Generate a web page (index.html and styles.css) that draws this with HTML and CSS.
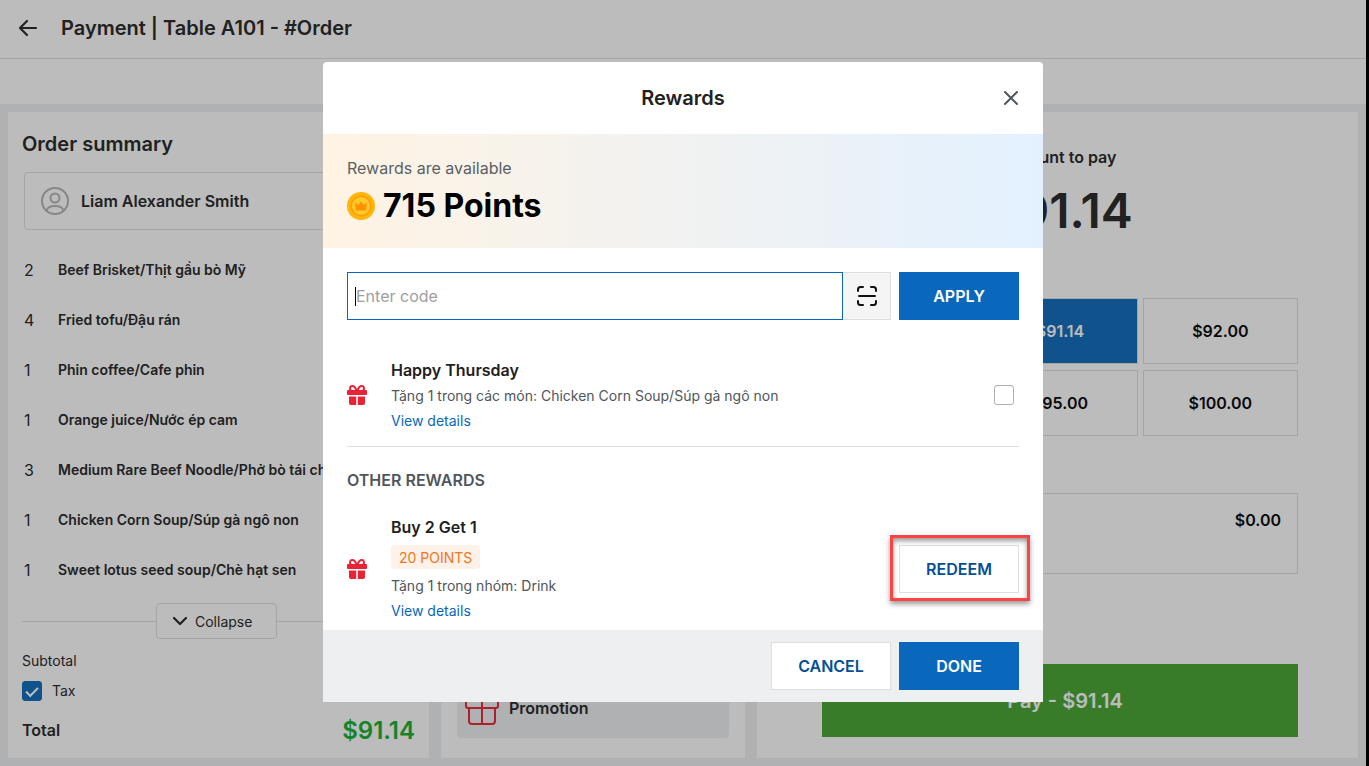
FILE: index.html
```
<!DOCTYPE html>
<html lang="en">
  <head>
    <meta charset="utf-8">
    <title>Payment</title>
    <link rel="stylesheet" href="styles.css">
  </head>
  <body>
    <div class="app">
      <header class="topbar">
        <button class="icon-btn" aria-label="Back">
          <svg width="20" height="18" viewBox="0 0 20 18" fill="none" stroke="#212121" stroke-width="2.200" stroke-linecap="round" stroke-linejoin="round"><path d="M18 9H2M9 2L2 9l7 7"/></svg>
        </button>
        <h1>Payment | Table A101 - #Order</h1>
      </header>
      <div class="subbar"></div>

      <main class="columns">
        <section class="panel order">
          <h2>Order summary</h2>
          <div class="customer">
            <svg width="28" height="28" viewBox="0 0 28 28" fill="none" stroke="#b0b3b5" stroke-width="2"><circle cx="14" cy="14" r="13"/><circle cx="14" cy="11" r="4.500"/><path d="M5.500 23.500c1-3.500 4-4.500 8.500-4.500s7.500 1 8.500 4.500"/></svg>
            <span>Liam Alexander Smith</span>
          </div>
          <ul class="items">
            <li><span class="qty">2</span><span class="name">Beef Brisket/Thịt gầu bò Mỹ</span></li>
            <li><span class="qty">4</span><span class="name">Fried tofu/Đậu rán</span></li>
            <li><span class="qty">1</span><span class="name">Phin coffee/Cafe phin</span></li>
            <li><span class="qty">1</span><span class="name">Orange juice/Nước ép cam</span></li>
            <li><span class="qty">3</span><span class="name">Medium Rare Beef Noodle/Phở bò tái ch</span></li>
            <li><span class="qty">1</span><span class="name">Chicken Corn Soup/Súp gà ngô non</span></li>
            <li><span class="qty">1</span><span class="name">Sweet lotus seed soup/Chè hạt sen</span></li>
          </ul>
          <div class="collapse-row">
            <button class="collapse">
              <svg width="16" height="10" viewBox="0 0 16 10" fill="none" stroke="#212121" stroke-width="2.200" stroke-linecap="round" stroke-linejoin="round"><path d="M2 2l6 6 6-6"/></svg>
              Collapse
            </button>
          </div>
          <p class="subtotal">Subtotal</p>
          <label class="tax"><input type="checkbox" class="check" checked>Tax</label>
          <div class="total">
            <span>Total</span>
            <strong>$91.14</strong>
          </div>
        </section>

        <section class="panel extras">
          <button class="promo">
            <svg width="34" height="34" viewBox="0 0 34 34" fill="none" stroke="#ea2236" stroke-width="2" stroke-linejoin="round"><rect x="1" y="9" width="32" height="8" rx="2"/><path d="M4 17v13a3 3 0 0 0 3 3h20a3 3 0 0 0 3-3V17M17 9v24M17 9c-2-6-5-8-8-7s-3 7 1 7M17 9c2-6 5-8 8-7s3 7-1 7"/></svg>
            Promotion
          </button>
        </section>

        <section class="panel pay">
          <p class="pay-label">Amount to pay</p>
          <p class="pay-amount">$91.14</p>
          <div class="amounts">
            <button class="amount second active">$91.14</button>
            <button class="amount">$92.00</button>
            <button class="amount second">$95.00</button>
            <button class="amount">$100.00</button>
          </div>
          <div class="change">$0.00</div>
          <button class="pay-btn">Pay - $91.14</button>
        </section>
      </main>

      <div class="backdrop">
        <div class="modal" role="dialog" aria-labelledby="modal-title">
          <div class="modal-head">
            <h2 id="modal-title">Rewards</h2>
            <button class="icon-btn close" aria-label="Close">
              <svg width="16" height="16" viewBox="0 0 16 16" fill="none" stroke="#50565c" stroke-width="2" stroke-linecap="round"><path d="M2 2l12 12M14 2L2 14"/></svg>
            </button>
          </div>
          <div class="banner">
            <p class="banner-label">Rewards are available</p>
            <p class="points">
              <svg width="28" height="28" viewBox="0 0 28 28"><circle cx="14" cy="14" r="14" fill="#ffb509"/><circle cx="14" cy="14" r="10.500" fill="#ff9d06"/><circle cx="14" cy="14" r="9" fill="#ffc929"/><path d="M8 10.500l3.200 2.500L14 9.500l2.800 3.500 3.200-2.500-1 8H9z" fill="#ff9203"/></svg>
              715 Points
            </p>
          </div>

          <div class="modal-body">
            <form class="code">
              <div class="code-field">
                <input type="text" placeholder="Enter code" aria-label="Enter code">
              </div>
              <button type="button" class="scan" aria-label="Scan code">
                <svg width="22" height="22" viewBox="0 0 22 22" fill="none" stroke="#111" stroke-width="2" stroke-linecap="round"><path d="M2 6V4.500A2.500 2.500 0 0 1 4.500 2H7M15 2h2.500A2.500 2.500 0 0 1 20 4.500V6M20 16v1.500a2.500 2.500 0 0 1-2.500 2.500H15M7 20H4.500A2.500 2.500 0 0 1 2 17.500V16M3 11h16"/></svg>
              </button>
              <button type="button" class="btn primary">APPLY</button>
            </form>

            <div class="reward first">
              <svg class="gift" width="20" height="20" viewBox="0 0 20 20" fill="#ea2236"><path d="M1 5h18a1 1 0 0 1 1 1v3a1 1 0 0 1-1 1H1a1 1 0 0 1-1-1V6a1 1 0 0 1 1-1zM2 11.500h7.200V20H4a2 2 0 0 1-2-2zM10.800 11.500H18V18a2 2 0 0 1-2 2h-5.200z"/><path d="M9.500 5.500C8.500 2.500 7 1 5.200 1 2.800 1 2.300 4 4 5.500M10.500 5.500C11.500 2.500 13 1 14.800 1c2.400 0 2.900 3 1.200 4.500" fill="none" stroke="#ea2236" stroke-width="2"/></svg>
              <div class="reward-text">
                <h3>Happy Thursday</h3>
                <p>Tặng 1 trong các món: Chicken Corn Soup/Súp gà ngô non</p>
                <a href="#">View details</a>
              </div>
              <input type="checkbox" class="check pick" aria-label="Happy Thursday">
            </div>

            <h3 class="group">OTHER REWARDS</h3>

            <div class="reward">
              <svg class="gift" width="20" height="20" viewBox="0 0 20 20" fill="#ea2236"><path d="M1 5h18a1 1 0 0 1 1 1v3a1 1 0 0 1-1 1H1a1 1 0 0 1-1-1V6a1 1 0 0 1 1-1zM2 11.500h7.200V20H4a2 2 0 0 1-2-2zM10.800 11.500H18V18a2 2 0 0 1-2 2h-5.200z"/><path d="M9.500 5.500C8.500 2.500 7 1 5.200 1 2.800 1 2.300 4 4 5.500M10.500 5.500C11.500 2.500 13 1 14.800 1c2.400 0 2.900 3 1.200 4.500" fill="none" stroke="#ea2236" stroke-width="2"/></svg>
              <div class="reward-text">
                <h3>Buy 2 Get 1</h3>
                <span class="badge">20 POINTS</span>
                <p>Tặng 1 trong nhóm: Drink</p>
                <a href="#">View details</a>
              </div>
              <div class="highlight">
                <button class="btn">REDEEM</button>
              </div>
            </div>
          </div>

          <div class="modal-foot">
            <button class="btn">CANCEL</button>
            <button class="btn primary">DONE</button>
          </div>
        </div>
      </div>
    </div>
  </body>
</html>
```
FILE: styles.css
```
* {
  box-sizing: border-box;
}
body {
  margin: 0;
  background: #000;
  font-family: Inter, "Liberation Sans", sans-serif;
  font-size: 14px;
  color: #212121;
}
h1, h2, h3, p, ul {
  margin: 0;
  padding: 0;
}
svg {
  display: block;
  flex: none;
}
button {
  font: inherit;
  color: inherit;
  cursor: pointer;
}
.icon-btn {
  display: flex;
  padding: 0;
  border: 0;
  background: none;
}

/* page */
.app {
  position: relative;
  display: flex;
  flex-direction: column;
  min-height: 100vh;
  margin-right: 3px;
  background: #eeeff1;
}
.topbar {
  display: flex;
  align-items: center;
  gap: 23px;
  height: 59px;
  padding: 0 18px 2px;
  background: #fff;
  border-bottom: 1px solid #dedede;
}
.topbar h1, .order h2, .modal-head h2 {
  font-size: 20px;
  line-height: 24px;
  font-weight: 600;
}
.subbar {
  height: 45px;
  background: #fff;
}
.columns {
  flex: 1;
  display: grid;
  grid-template-columns: 421fr 304fr 601fr;
  gap: 12px;
  padding: 8px;
}
.panel {
  display: flex;
  flex-direction: column;
  min-width: 0;
  background: #fff;
}

/* order summary */
.order {
  padding: 20px 14px 10px;
}
.customer {
  display: flex;
  align-items: center;
  gap: 12px;
  height: 58px;
  margin: 16px 2px 15px;
  padding: 0 16px;
  border: 1px solid #dedede;
  border-radius: 4px;
  font-size: 16px;
  font-weight: 600;
}
.items {
  list-style: none;
}
.items li {
  display: flex;
  align-items: center;
  height: 50px;
  padding-left: 2px;
}
.qty {
  width: 34px;
  font-size: 16px;
}
.name {
  padding-bottom: 2px;
  font-weight: 600;
  white-space: nowrap;
}
.collapse-row {
  display: flex;
  align-items: center;
  margin: 8px 4px 12px 0;
}
.collapse-row::before, .collapse-row::after {
  content: "";
  flex: 1;
  height: 1px;
  background: #dedede;
}
.collapse {
  display: flex;
  align-items: center;
  gap: 7px;
  width: 121px;
  height: 36px;
  padding: 0 15px;
  background: #fff;
  border: 1px solid #dedede;
  border-radius: 4px;
}
.subtotal {
  line-height: 20px;
}
.tax {
  display: flex;
  align-items: center;
  gap: 10px;
  line-height: 20px;
  margin-top: 10px;
}
.total {
  display: flex;
  align-items: center;
  justify-content: space-between;
  height: 36px;
  margin-top: 11px;
  font-size: 16px;
  font-weight: 600;
}
.total strong {
  font-size: 24px;
  font-weight: 600;
  color: #10ae2b;
}
.check {
  appearance: none;
  width: 20px;
  height: 20px;
  margin: 0;
  background: #fff;
  border: 1px solid #adadad;
  border-radius: 3px;
}
.check:checked {
  display: grid;
  place-items: center;
  background: #0968bb;
  border-color: #0968bb;
}
.check:checked::before {
  content: "";
  width: 10px;
  height: 5px;
  margin-bottom: 2px;
  border: solid #fff;
  border-width: 0 0 2px 2px;
  transform: rotate(-45deg);
}

/* extras */
.extras {
  justify-content: flex-end;
  padding: 16px 16px 20px;
}
.promo {
  display: flex;
  align-items: center;
  gap: 10px;
  height: 60px;
  padding: 0 8px;
  border: 0;
  border-radius: 4px;
  background: #eeeff1;
  font-size: 16px;
  font-weight: 600;
}

/* payment */
.pay {
  padding: 33px 60px 21px 65px;
  text-align: center;
  font-size: 16px;
  font-weight: 600;
}
.pay-label {
  line-height: 24px;
}
.pay-amount {
  margin: 13px 0 58px;
  font-size: 48px;
  line-height: 58px;
}
.amounts {
  display: grid;
  grid-template-columns: repeat(3, 1fr);
  gap: 6px 5px;
}
.amount {
  height: 66px;
  background: #fff;
  border: 1px solid #dedede;
  color: #000;
}
.second {
  grid-column: 2;
}
.active {
  background: #0968bb;
  color: #fff;
}
.change {
  height: 81px;
  margin-top: 57px;
  padding: 16px;
  border: 1px solid #dedede;
  line-height: 20px;
  text-align: right;
  color: #000;
}
.pay-btn {
  height: 73px;
  margin-top: auto;
  padding: 0 0 0 10px;
  border: 0;
  background: #42a42f;
  color: #fff;
  font-size: 20px;
}

/* rewards dialog */
.backdrop {
  position: absolute;
  inset: 0;
  display: flex;
  justify-content: center;
  align-items: flex-start;
  padding: 62px 16px;
  background: rgba(33, 33, 33, 0.3);
}
.modal {
  width: 100%;
  max-width: 720px;
  background: #fff;
  border-radius: 4px 4px 0 0;
}
.modal-head {
  display: grid;
  grid-template-columns: 1fr auto 1fr;
  align-items: center;
  height: 72px;
  padding: 0 24px;
}
.modal-head h2 {
  grid-column: 2;
}
.close {
  justify-self: end;
}
.banner {
  padding: 22px 24px 16px;
  background: linear-gradient(90deg, #fff3e3, #e3f1ff);
}
.banner-label {
  font-size: 16px;
  line-height: 24px;
  color: #5a6066;
}
.points {
  display: flex;
  align-items: center;
  gap: 8px;
  font-size: 32px;
  line-height: 52px;
  font-weight: 700;
  color: #000;
}
.modal-body {
  padding: 24px 24px 7px;
}
.code {
  display: flex;
  margin-bottom: 37px;
}
.code-field {
  position: relative;
  flex: 1;
}
/* text caret */
.code-field::after {
  content: "";
  position: absolute;
  top: 15px;
  left: 8px;
  width: 1px;
  height: 19px;
  background: #000;
}
.code-field input {
  width: 100%;
  height: 48px;
  padding: 0 8px;
  border: 1px solid #0968bb;
  outline: 0;
  font: inherit;
  font-size: 16px;
}
.code-field input::placeholder {
  color: #9e9e9e;
}
.scan {
  display: grid;
  place-items: center;
  width: 48px;
  height: 48px;
  margin-right: 8px;
  padding: 0;
  background: #f5f5f5;
  border: 1px solid #dedede;
  border-left: 0;
}
.btn {
  width: 120px;
  height: 48px;
  background: #fff;
  border: 1px solid #dedede;
  color: #054f94;
  font-size: 16px;
  font-weight: 600;
}
.btn.primary {
  background: #0968bb;
  border-color: #0968bb;
  color: #fff;
}
.reward {
  display: flex;
  align-items: center;
}
.reward.first {
  padding-bottom: 13px;
  border-bottom: 1px solid #dedede;
}
.reward-text {
  flex: 1;
  margin-left: 24px;
  line-height: 25px;
}
.reward-text h3, .group {
  font-size: 16px;
  line-height: 26px;
  font-weight: 600;
}
.reward-text p {
  color: #50565c;
}
.reward-text a {
  display: block;
  color: #0968bb;
  text-decoration: none;
}
.pick {
  margin-right: 5px;
}
.group {
  margin: 20px 0 21px;
  color: #50565c;
}
.badge {
  display: block;
  width: fit-content;
  margin: 5px 0 4px;
  padding: 2px 8px 0;
  border-radius: 4px;
  background: #fdf1e8;
  color: #f07722;
  line-height: 22px;
}
.highlight {
  position: relative;
}
.highlight::after {
  content: "";
  position: absolute;
  inset: -10px -11px -8px -9px;
  border: 3px solid #ff4343;
  box-shadow: 0 3px 5px rgba(0, 0, 0, 0.4), inset 0 3px 5px rgba(0, 0, 0, 0.4);
  pointer-events: none;
}
.modal-foot {
  display: flex;
  justify-content: flex-end;
  gap: 8px;
  padding: 12px 24px;
  background: #eeeff1;
}
```
